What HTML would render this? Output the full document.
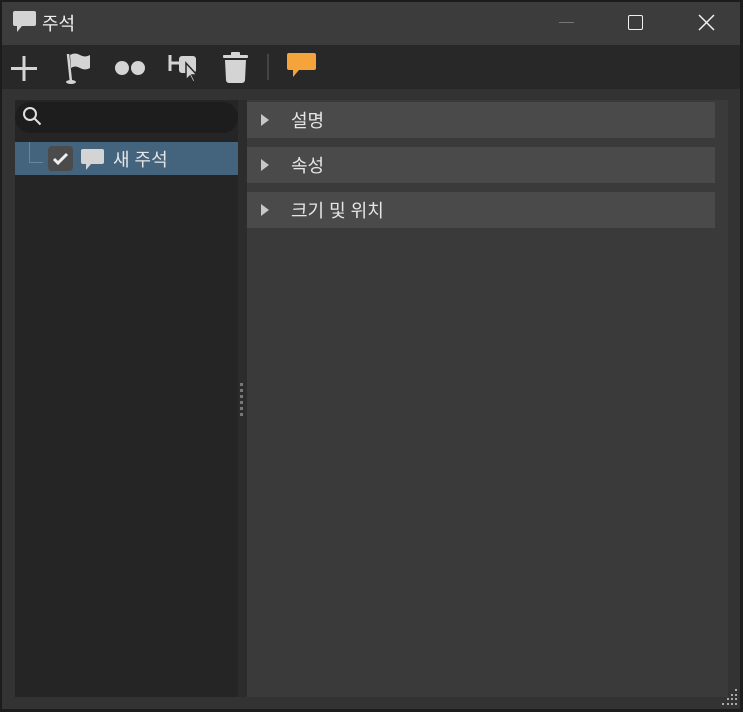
<!DOCTYPE html>
<html><head><meta charset="utf-8"><style>
*{margin:0;padding:0;box-sizing:border-box}
body{width:743px;height:712px;background:#1c1c1c;font-family:"Liberation Sans","Noto Sans CJK KR",sans-serif;position:relative;overflow:hidden;color:#e6e6e6}
.a{position:absolute}
.hdr{left:247px;width:468px;height:36px;background:#4a4a4a;font-size:18px;line-height:36px}
.hdr .t{position:absolute;left:14px;top:12px;width:0;height:0;border-left:8px solid #c8c8c8;border-top:6px solid transparent;border-bottom:6px solid transparent}
.hdr span{position:absolute;left:44px;top:1px}
</style></head><body>
<div class="a" style="left:2px;top:2px;width:738px;height:707px;background:#333"></div>
<div class="a" style="left:2px;top:2px;width:738px;height:43px;background:#3c3c3c"></div>
<svg class="a" style="left:12px;top:10px" width="26" height="24" viewBox="0 0 26 24"><path d="M3 1h19a2 2 0 0 1 2 2v11a2 2 0 0 1-2 2H10l-5 6v-6H3a2 2 0 0 1-2-2V3a2 2 0 0 1 2-2z" fill="#d4d4d4"/></svg>
<div class="a" style="left:42px;top:10px;font-size:18px;color:#f0f0f0">주석</div>
<div class="a" style="left:559px;top:22px;width:15px;height:1px;background:#777"></div>
<div class="a" style="left:628px;top:15px;width:15px;height:15px;border:1.5px solid #f0f0f0;border-radius:2px"></div>
<svg class="a" style="left:698px;top:14px" width="17" height="17"><path d="M1 1L16 16M16 1L1 16" stroke="#f0f0f0" stroke-width="1.5"/></svg>
<div class="a" style="left:2px;top:45px;width:738px;height:44px;background:#282828"></div>
<svg class="a" style="left:0;top:45px" width="330" height="44">
<path d="M24 11v25M11 23.5h26" stroke="#d4d4d4" stroke-width="3"/>
<path d="M68 9l3 28" stroke="#d4d4d4" stroke-width="2.5"/><ellipse cx="71" cy="37" rx="5" ry="2" fill="#d4d4d4"/>
<path d="M70 10q5-3 10 0t10 0v13q-5 3-10 0t-9 0z" fill="#d4d4d4"/>
<circle cx="122" cy="23" r="7" fill="#d4d4d4"/><circle cx="138" cy="23" r="7" fill="#d4d4d4"/>
<path d="M170 10v16M170 18h9" stroke="#d4d4d4" stroke-width="3"/>
<rect x="179" y="11" width="17" height="17" rx="3" fill="#d4d4d4"/>
<path d="M186 18v17l4-4 3 6 2-1-3-6h5z" fill="#d4d4d4" stroke="#282828" stroke-width="1.5"/>
<rect x="223" y="10" width="25" height="3" rx="1" fill="#d4d4d4"/><rect x="231" y="7" width="9" height="4" rx="1" fill="#d4d4d4"/>
<path d="M225 15h21l-1 20a3 3 0 0 1-3 3h-13a3 3 0 0 1-3-3z" fill="#d4d4d4"/>
<rect x="267" y="9" width="2" height="26" fill="#444"/>
<path d="M289 8h25a2 2 0 0 1 2 2v13a2 2 0 0 1-2 2h-15l-6 7v-7h-4a2 2 0 0 1-2-2V10a2 2 0 0 1 2-2z" fill="#f4a43b"/>
</svg>
<div class="a" style="left:15px;top:100px;width:223px;height:597px;background:#252525"></div>
<div class="a" style="left:15px;top:102px;width:223px;height:31px;background:#1d1d1d;border-radius:16px"></div>
<svg class="a" style="left:22px;top:106px" width="22" height="22"><circle cx="8" cy="8" r="6" stroke="#e0e0e0" stroke-width="2" fill="none"/><path d="M12.5 12.5l6 6" stroke="#e0e0e0" stroke-width="2"/></svg>
<div class="a" style="left:15px;top:142px;width:223px;height:33px;background:#44647e"></div>
<div class="a" style="left:29px;top:142px;width:14px;height:21px;border-left:1px solid #6a849a;border-bottom:1px solid #6a849a"></div>
<div class="a" style="left:48px;top:146px;width:25px;height:25px;background:#4b4b4b;border-radius:4px"></div>
<svg class="a" style="left:48px;top:146px" width="25" height="25"><path d="M6 13l4 4 9-9" stroke="#f0f0f0" stroke-width="3" fill="none"/></svg>
<svg class="a" style="left:80px;top:148px" width="26" height="24" viewBox="0 0 26 24"><path d="M3 1h19a2 2 0 0 1 2 2v11a2 2 0 0 1-2 2H11l-5 6v-6H3a2 2 0 0 1-2-2V3a2 2 0 0 1 2-2z" fill="#d4d4d4"/></svg>
<div class="a" style="left:113px;top:146px;font-size:18px;color:#e6e6e6">새 주석</div>
<div class="a" style="left:238px;top:100px;width:9px;height:597px;background:#2c2c2c"></div>
<div class="a" style="left:240px;top:383px;width:3px;height:33px;background:repeating-linear-gradient(#777 0 3px,transparent 3px 6px)"></div>
<div class="a" style="left:247px;top:100px;width:481px;height:597px;background:#3a3a3a"></div>
<div class="a hdr" style="top:102px"><i class="t"></i><span>설명</span></div>
<div class="a hdr" style="top:147px"><i class="t"></i><span>속성</span></div>
<div class="a hdr" style="top:192px"><i class="t"></i><span>크기 및 위치</span></div>
<svg class="a" style="left:720px;top:689px" width="18" height="18"><g fill="#aaa"><rect x="15" y="0" width="2" height="2"/><rect x="11" y="5" width="2" height="2"/><rect x="15" y="5" width="2" height="2"/><rect x="7" y="9" width="2" height="2"/><rect x="11" y="9" width="2" height="2"/><rect x="15" y="9" width="2" height="2"/><rect x="2" y="14" width="2" height="2"/><rect x="7" y="14" width="2" height="2"/><rect x="11" y="14" width="2" height="2"/><rect x="15" y="14" width="2" height="2"/></g></svg>
</body></html>
